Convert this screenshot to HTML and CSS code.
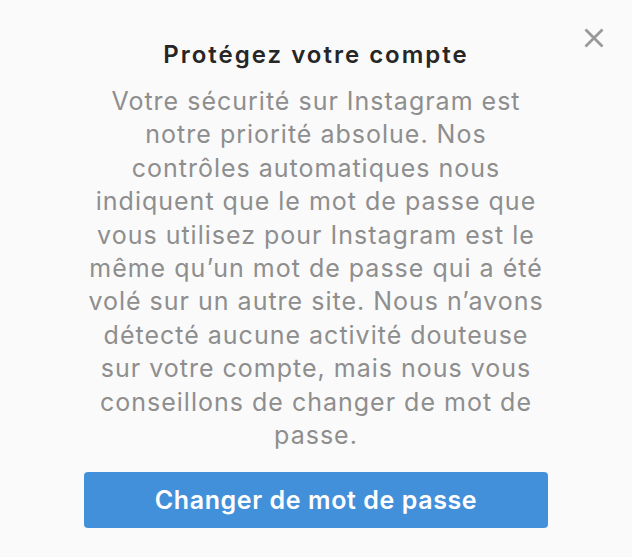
FILE: index.html
```html
<!DOCTYPE html>
<html lang="fr">
<head>
<meta charset="utf-8">
<link rel="stylesheet" href="styles.css">
</head>
<body>
<div class="dialog">
  <button class="close" aria-label="Fermer">
    <svg width="20" height="20" viewBox="0 0 20 20"><path d="M1.5 1.5 L18.5 18.5 M18.5 1.5 L1.5 18.5" stroke="#999" stroke-width="2.8" stroke-linecap="butt" fill="none"/></svg>
  </button>
  <div class="content">
    <h1 class="title">Protégez votre compte</h1>
    <p class="text">Votre sécurité sur Instagram est notre priorité absolue. Nos contrôles automatiques nous indiquent que le mot de passe que vous utilisez pour Instagram est le même qu’un mot de passe qui a été volé sur un autre site. Nous n’avons détecté aucune activité douteuse sur votre compte, mais nous vous conseillons de changer de mot de passe.</p>
    <button class="primary">Changer de mot de passe</button>
  </div>
</div>
</body>
</html>
```
FILE: styles.css
```css
html, body {
  margin: 0;
  padding: 0;
  background: #fafafa;
}
body {
  font-family: Inter, "Noto Sans", sans-serif;
  width: 632px;
  height: 557px;
  overflow: hidden;
}
.dialog {
  position: relative;
  height: 557px;
}
.close {
  position: absolute;
  top: 28px;
  right: 28px;
  width: 20px;
  height: 20px;
  padding: 0;
  border: 0;
  background: none;
}
.close svg { display: block; }
.content {
  width: 464px;
  margin: 0 auto;
  padding-top: 38px;
  display: flex;
  flex-direction: column;
  align-items: center;
  text-align: center;
}
.title {
  margin: 0;
  font-size: 24px;
  font-weight: 600;
  line-height: 34px;
  letter-spacing: 2px;
  color: #262626;
}
.text {
  width: 456px;
  margin: 13px 0 0;
  font-size: 25px;
  line-height: 33.4px;
  letter-spacing: 1px;
  color: #8e8e8e;
}
.primary {
  margin-top: 20px;
  width: 464px;
  height: 56px;
  border: 0;
  border-radius: 4px;
  background: #4390da;
  color: #fff;
  font-family: inherit;
  font-size: 25px;
  font-weight: 600;
  letter-spacing: 0.6px;
}
```
